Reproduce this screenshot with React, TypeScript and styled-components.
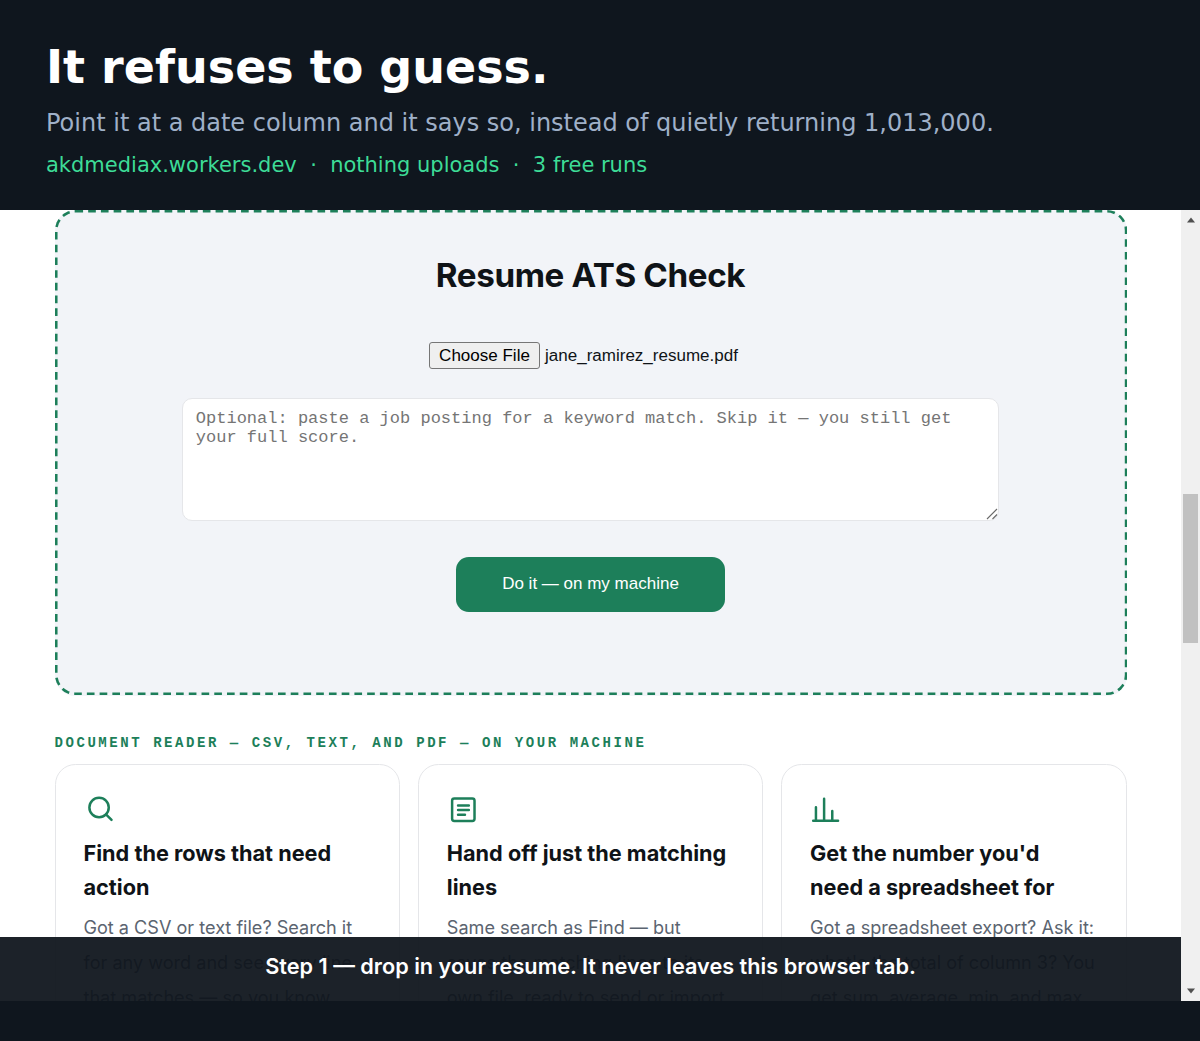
import React from "react";
import styled, { createGlobalStyle } from "styled-components";

const color = {
  ink: "#0f161e",
  green: "#1d7f5a",
  line: "#e5e6e9",
  panel: "#f2f4f8",
  text: "#0f1317",
  muted: "#5b6470",
};

const font = {
  banner: `"DejaVu Sans", sans-serif`,
  body: `Inter, sans-serif`,
  control: `"Liberation Sans", Arial, sans-serif`,
  mono: `"Liberation Mono", "Courier New", monospace`,
};

type TTool = {
  icon: React.ReactNode;
  title: string[];
  lines: string[];
};

const tools: TTool[] = [
  {
    icon: (
      <>
        <circle cx="10.9" cy="10.5" r="7" />
        <path d="M15.9 15.5l4 3.9" />
      </>
    ),
    title: ["Find the rows that need", "action"],
    lines: [
      "Got a CSV or text file? Search it",
      "for any word and see every line",
      "that matches — so you know",
    ],
  },
  {
    icon: (
      <>
        <rect x="3.7" y="4" width="16.2" height="16.2" rx="1.6" />
        <path d="M8 9h7.8M8 12.3h7.8M8 15.7h5" />
      </>
    ),
    title: ["Hand off just the matching", "lines"],
    lines: [
      "Same search as Find — but",
      "saves the matching lines to its",
      "own file, ready to send or import",
    ],
  },
  {
    icon: <path d="M2.3 20h18M4.3 20V10.3M10.2 20V4.1M16.1 20v-7" />,
    title: ["Get the number you'd", "need a spreadsheet for"],
    lines: [
      "Got a spreadsheet export? Ask it:",
      "what's the total of column 3? You",
      "get sum, average, min, and max",
    ],
  },
];

const App: React.FC = () => {
  return (
    <Page>
      <GlobalStyle />
      <Banner>
        <BannerTitle>It refuses to guess.</BannerTitle>
        <BannerText>
          Point it at a date column and it says so, instead of quietly returning
          1,013,000.
        </BannerText>
        <BannerMeta>
          {"akdmediax.workers.dev  ·  nothing uploads  ·  3 free runs"}
        </BannerMeta>
      </Banner>
      <Viewport>
        <Content>
          <DropZone>
            <DropTitle>Resume ATS Check</DropTitle>
            <FileRow>
              <FileButton type="button">Choose File</FileButton>
              <FileName>jane_ramirez_resume.pdf</FileName>
            </FileRow>
            <PostingBox>
              <Posting placeholder="Optional: paste a job posting for a keyword match. Skip it — you still get your full score." />
              <Grip viewBox="0 0 12 12">
                <path d="M1 11L11 1M6.5 11L11 6.5" />
              </Grip>
            </PostingBox>
            <RunButton type="button">Do it — on my machine</RunButton>
          </DropZone>
          <SectionLabel>
            Document reader — CSV, text, and PDF — on your machine
          </SectionLabel>
          <Cards>
            {tools.map((tool) => (
              <Card key={tool.title[0]}>
                <CardIcon viewBox="0 0 24 24">{tool.icon}</CardIcon>
                <CardTitle>
                  {tool.title.map((line) => (
                    <Line key={line}>{line}</Line>
                  ))}
                </CardTitle>
                <CardText>
                  {tool.lines.map((line) => (
                    <Line key={line}>{line}</Line>
                  ))}
                </CardText>
              </Card>
            ))}
          </Cards>
          <Caption>
            Step 1 — drop in your resume. It never leaves this browser tab.
          </Caption>
        </Content>
        <ScrollTrack>
          <ScrollArrow viewBox="0 0 10 6">
            <path d="M5 0.5L9 5.5H1z" />
          </ScrollArrow>
          <ScrollThumb />
          <ScrollArrow viewBox="0 0 10 6">
            <path d="M5 5.5L9 0.5H1z" />
          </ScrollArrow>
        </ScrollTrack>
      </Viewport>
    </Page>
  );
};

const GlobalStyle = createGlobalStyle`
  *,
  *::before {
    box-sizing: border-box;
  }

  body {
    margin: 0;
    background: ${color.ink};
  }
`;

const Page = styled.div`
  width: 1200px;
  height: 1041px;
  overflow: hidden;
  background: ${color.ink};
`;

const Banner = styled.header`
  height: 210px;
  padding: 40px 46px 0;
  font-family: ${font.banner};
`;

const BannerTitle = styled.h1`
  margin: 0;
  font-size: 46px;
  line-height: 54px;
  font-weight: 700;
  color: #fff;
`;

const BannerText = styled.p`
  margin: 15px 0 0;
  font-size: 24px;
  line-height: 28px;
  white-space: nowrap;
  color: #9fb0c8;
`;

const BannerMeta = styled.p`
  margin: 15px 0 0;
  font-size: 21px;
  line-height: 26px;
  white-space: pre;
  color: #3ddc97;
`;

const Viewport = styled.div`
  display: flex;
  height: 791px;
  overflow: hidden;
  background: #fff;
`;

const Content = styled.main`
  position: relative;
  width: 1181px;
  height: 791px;
  padding: 0 54.5px;
  overflow: hidden;
`;

const DropZone = styled.section`
  position: relative;
  display: flex;
  flex-direction: column;
  align-items: center;
  height: 485.5px;
  padding-top: 44px;
  border-radius: 20.4px;
  background: ${color.panel};

  /* dashes drawn at 1x and enlarged so they keep their rhythm */
  &::before {
    content: "";
    position: absolute;
    top: 0;
    left: 0;
    width: 840px;
    height: 380px;
    border: 2px dashed ${color.green};
    border-radius: 16px;
    transform: scale(1.2766);
    transform-origin: 0 0;
    pointer-events: none;
  }
`;

const DropTitle = styled.h2`
  margin: 0;
  font-family: ${font.body};
  font-size: 33.2px;
  line-height: 42px;
  font-weight: 700;
  letter-spacing: -0.012em;
  color: ${color.text};
`;

const FileRow = styled.div`
  display: flex;
  align-items: center;
  gap: 5px;
  width: 323px;
  margin-top: 46px;
  font-family: ${font.control};
  font-size: 17.03px;
`;

const FileButton = styled.button`
  width: 111px;
  height: 27px;
  padding: 0;
  border: 1.3px solid #767676;
  border-radius: 3px;
  background: #efefef;
  font: inherit;
  color: #000;
`;

const FileName = styled.span`
  white-space: nowrap;
  color: ${color.text};
`;

const PostingBox = styled.div`
  position: relative;
  width: 817px;
  height: 123px;
  margin-top: 29px;
`;

const Posting = styled.textarea`
  display: block;
  width: 100%;
  height: 100%;
  padding: 10px 12.8px;
  border: 1.3px solid ${color.line};
  border-radius: 10px;
  background: #fff;
  font-family: ${font.mono};
  font-size: 17.02px;
  line-height: 19.1px;
  resize: none;

  &::placeholder {
    color: #757575;
  }
`;

const Grip = styled.svg`
  position: absolute;
  right: 1px;
  bottom: 1px;
  width: 12px;
  height: 12px;
  fill: none;
  stroke: #6a6a6a;
  stroke-width: 1.1;
`;

const RunButton = styled.button`
  width: 269px;
  height: 54.5px;
  margin-top: 36px;
  padding: 0;
  border: 0;
  border-radius: 12.8px;
  background: ${color.green};
  font-family: ${font.control};
  font-size: 17px;
  color: #fff;
`;

const SectionLabel = styled.p`
  margin: 38px 0 12px;
  font-family: ${font.mono};
  font-size: 14.04px;
  line-height: 18px;
  font-weight: 700;
  letter-spacing: 2.54px;
  text-transform: uppercase;
  white-space: nowrap;
  color: ${color.green};
`;

const Cards = styled.section`
  display: grid;
  grid-template-columns: repeat(3, minmax(0, 1fr));
  gap: 17.9px;
`;

const Card = styled.article`
  height: 320px;
  padding: 28px;
  border: 1.3px solid ${color.line};
  border-radius: 20.4px;
  background: #fff;
  font-family: ${font.body};
`;

const CardIcon = styled.svg`
  display: block;
  width: 33.2px;
  height: 33.2px;
  fill: none;
  stroke: ${color.green};
  stroke-width: 1.8;
  stroke-linecap: round;
  stroke-linejoin: round;
`;

const CardTitle = styled.h3`
  margin: 10px 0 0;
  font-size: 21.7px;
  line-height: 34.7px;
  font-weight: 700;
  color: ${color.text};
`;

const CardText = styled.p`
  margin: 4.5px 0 0;
  font-size: 18.1px;
  line-height: 35px;
  color: ${color.muted};
`;

const Line = styled.span`
  display: block;
  white-space: nowrap;
`;

const Caption = styled.div`
  position: absolute;
  left: 0;
  right: 0;
  bottom: 0;
  display: flex;
  align-items: center;
  justify-content: center;
  height: 64px;
  padding-bottom: 7px;
  background: rgba(15, 21, 29, 0.945);
  font-family: ${font.body};
  font-size: 21.7px;
  font-weight: 600;
  white-space: nowrap;
  color: #fff;
`;

const ScrollTrack = styled.aside`
  display: flex;
  flex-direction: column;
  align-items: center;
  justify-content: space-between;
  width: 19px;
  padding: 7px 0;
  background: #f0f0f0;
`;

const ScrollThumb = styled.div`
  width: 14.5px;
  height: 148.5px;
  margin-bottom: 74px;
  background: #c1c1c1;
`;

const ScrollArrow = styled.svg`
  width: 10px;
  height: 6px;
  fill: #505050;
`;

export default App;
